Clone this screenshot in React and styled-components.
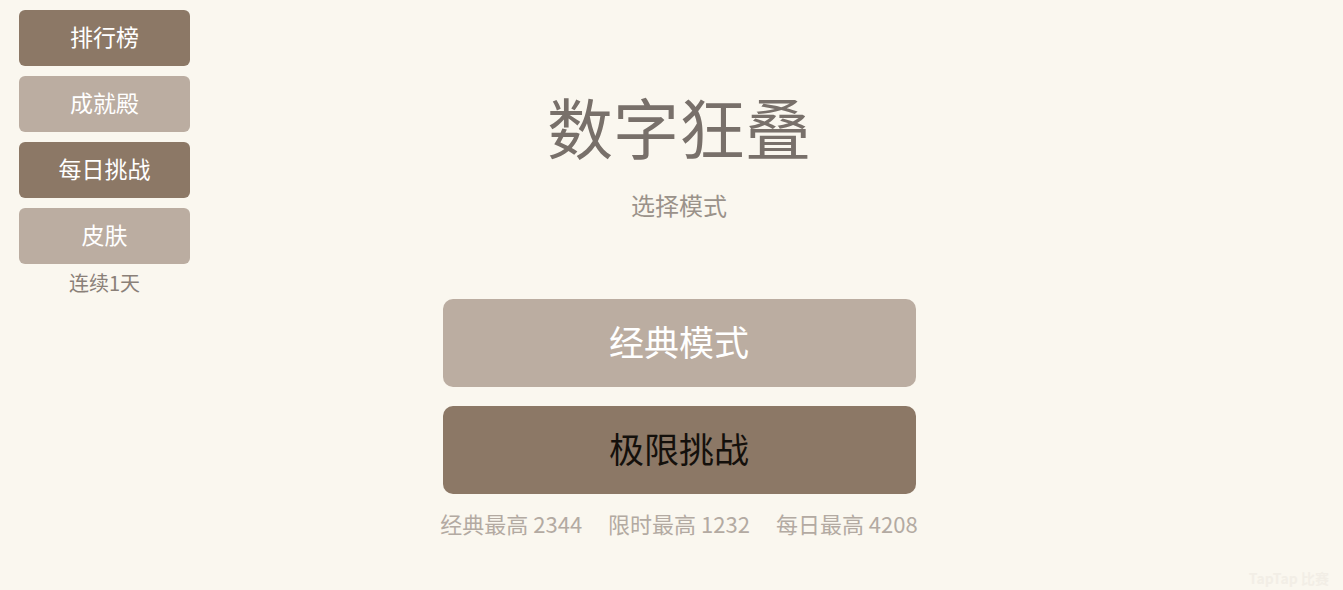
import styled, { createGlobalStyle } from "styled-components";

const GlobalStyle = createGlobalStyle`
  html, body {
    margin: 0;
    padding: 0;
    background: #faf7ef;
  }
  body {
    font-family: "Noto Sans CJK SC", "Noto Sans", sans-serif;
  }
`;

const Page = styled.div`
  position: relative;
  width: 1343px;
  height: 590px;
  overflow: hidden;
  background: #faf7ef;
`;

const SideMenu = styled.div`
  position: absolute;
  left: 19px;
  top: 10px;
  width: 171px;
  display: flex;
  flex-direction: column;
  gap: 10px;
`;

const SideButton = styled.div`
  height: 56px;
  box-sizing: border-box;
  padding-bottom: 4px;
  border-radius: 6px;
  background: ${(props) => (props.dark ? "#8c7866" : "#bbada1")};
  color: #fff;
  font-size: 23px;
  display: flex;
  justify-content: center;
  align-items: center;
`;

const Streak = styled.div`
  margin-top: -5px;
  text-align: center;
  font-size: 20px;
  line-height: 28px;
  color: #8a8078;
`;

const Main = styled.div`
  padding-left: 15px;
  padding-top: 92px;
  display: flex;
  flex-direction: column;
  align-items: center;
`;

const Title = styled.div`
  font-size: 66px;
  line-height: 66px;
  color: #78706a;
`;

const Subtitle = styled.div`
  margin-top: 35px;
  font-size: 24px;
  line-height: 24px;
  color: #9a928a;
`;

const ModeList = styled.div`
  margin-top: 82px;
  display: flex;
  flex-direction: column;
  gap: 19px;
`;

const ModeButton = styled.div`
  width: 473px;
  height: 88px;
  box-sizing: border-box;
  padding-bottom: 5px;
  border-radius: 10px;
  background: ${(props) => (props.dark ? "#8c7866" : "#bbada1")};
  color: ${(props) => (props.dark ? "#14100c" : "#fff")};
  font-size: 35px;
  display: flex;
  justify-content: center;
  align-items: center;
`;

const Stats = styled.div`
  margin-top: 18px;
  display: flex;
  gap: 26px;
  font-size: 22px;
  line-height: 22px;
  color: #b3aaa2;
`;

const Watermark = styled.div`
  position: absolute;
  right: 14px;
  bottom: 2px;
  font-size: 14px;
  font-weight: bold;
  color: #f2eee6;
`;

const App = () => {
  const menu = [
    { label: "排行榜", dark: true },
    { label: "成就殿", dark: false },
    { label: "每日挑战", dark: true },
    { label: "皮肤", dark: false },
  ];
  const stats = ["经典最高 2344", "限时最高 1232", "每日最高 4208"];

  return (
    <Page>
      <GlobalStyle />
      <Main>
        <Title>数字狂叠</Title>
        <Subtitle>选择模式</Subtitle>
        <ModeList>
          <ModeButton>经典模式</ModeButton>
          <ModeButton dark>极限挑战</ModeButton>
        </ModeList>
        <Stats>
          {stats.map((s) => (
            <span key={s}>{s}</span>
          ))}
        </Stats>
      </Main>
      <SideMenu>
        {menu.map((m) => (
          <SideButton key={m.label} dark={m.dark}>
            {m.label}
          </SideButton>
        ))}
        <Streak>连续1天</Streak>
      </SideMenu>
      <Watermark>TapTap 比赛</Watermark>
    </Page>
  );
};

export default App;
